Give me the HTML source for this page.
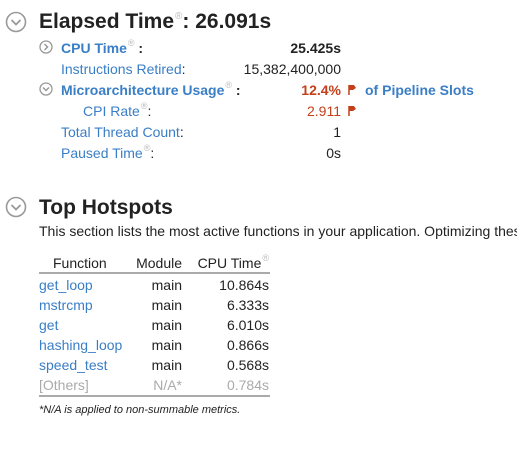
<!DOCTYPE html>
<html><head><meta charset="utf-8"><style>
html,body{margin:0;width:517px;height:458px;overflow:hidden}
body{background:#fff;font-family:"Liberation Sans",sans-serif;color:#222;position:relative}
.a{position:absolute;white-space:nowrap}
.h{font-size:21px;font-weight:bold;color:#222;line-height:24px}
.t{font-size:14px;line-height:16px}
.b{color:#3a7ec6}
.o{color:#c4401a}
.r{text-align:right}
sup{font-size:9px;color:#bbb;font-weight:normal;vertical-align:baseline;position:relative;top:-7px;line-height:0;margin-left:1px}
.hr{position:absolute;left:39px;width:231px;height:2px;background:#aaa}
.g{color:#aaa}
</style></head><body>
<svg class="a" style="left:5px;top:11px" width="22" height="22"><circle cx="11" cy="11" r="9.5" fill="none" stroke="#999" stroke-width="1.6"/><path d="M6.5 9 L11 13.5 L15.5 9" fill="none" stroke="#999" stroke-width="1.8"/></svg>
<div class="a h" style="left:39px;top:10px">Elapsed Time<sup style="font-size:10px;top:-9px">®</sup>: 26.091s</div>

<svg class="a" style="left:39px;top:40px" width="14" height="14"><circle cx="7" cy="7" r="6" fill="none" stroke="#999" stroke-width="1.3"/><path d="M5.5 4 L8.5 7 L5.5 10" fill="none" stroke="#999" stroke-width="1.5"/></svg>
<div class="a t b" style="left:61px;top:40px;font-weight:bold">CPU Time<sup>®</sup><span style="color:#222"> :</span></div>
<div class="a t r" style="right:176px;top:40px;font-weight:bold">25.425s</div>

<div class="a t b" style="left:61px;top:61px">Instructions Retired<span style="color:#222">:</span></div>
<div class="a t r" style="right:176px;top:61px">15,382,400,000</div>

<svg class="a" style="left:39px;top:82px" width="14" height="14"><circle cx="7" cy="7" r="6" fill="none" stroke="#999" stroke-width="1.3"/><path d="M4 5.5 L7 8.5 L10 5.5" fill="none" stroke="#999" stroke-width="1.5"/></svg>
<div class="a t b" style="left:61px;top:82px;font-weight:bold">Microarchitecture Usage<sup>®</sup><span style="color:#222"> :</span></div>
<div class="a t r o" style="right:176px;top:82px;font-weight:bold">12.4%</div>
<svg class="a" style="left:348px;top:84px" width="10" height="12"><path d="M1 1 V11" stroke="#c4401a" stroke-width="1.5"/><path d="M1.5 1 H6 L8 4 L5 6 H1.5Z" fill="#c4401a"/></svg>
<div class="a t b" style="left:365px;top:82px;font-weight:bold">of Pipeline Slots</div>

<div class="a t b" style="left:83px;top:103px">CPI Rate<sup>®</sup><span style="color:#222">:</span></div>
<div class="a t r o" style="right:176px;top:103px">2.911</div>
<svg class="a" style="left:348px;top:105px" width="10" height="12"><path d="M1 1 V11" stroke="#c4401a" stroke-width="1.5"/><path d="M1.5 1 H6 L8 4 L5 6 H1.5Z" fill="#c4401a"/></svg>

<div class="a t b" style="left:61px;top:124px">Total Thread Count<span style="color:#222">:</span></div>
<div class="a t r" style="right:176px;top:124px">1</div>
<div class="a t b" style="left:61px;top:145px">Paused Time<sup>®</sup><span style="color:#222">:</span></div>
<div class="a t r" style="right:176px;top:145px">0s</div>

<svg class="a" style="left:5px;top:196px" width="22" height="22"><circle cx="11" cy="11" r="9.5" fill="none" stroke="#999" stroke-width="1.6"/><path d="M6.5 9 L11 13.5 L15.5 9" fill="none" stroke="#999" stroke-width="1.8"/></svg>
<div class="a h" style="left:39px;top:196px">Top Hotspots</div>
<div class="a t" style="left:39px;top:223px;width:478px;overflow:hidden">This section lists the most active functions in your application. Optimizing these hotspot functions typically results in improving overall application performance.</div>

<div class="a t" style="left:53px;top:255px">Function</div>
<div class="a t r" style="right:335px;top:255px">Module</div>
<div class="a t r" style="right:248px;top:255px">CPU Time<sup>®</sup></div>
<div class="hr" style="top:272px"></div>

<div class="a t b" style="left:39px;top:277px">get_loop</div><div class="a t r" style="right:335px;top:277px">main</div><div class="a t r" style="right:248px;top:277px">10.864s</div>
<div class="a t b" style="left:39px;top:297px">mstrcmp</div><div class="a t r" style="right:335px;top:297px">main</div><div class="a t r" style="right:248px;top:297px">6.333s</div>
<div class="a t b" style="left:39px;top:317px">get</div><div class="a t r" style="right:335px;top:317px">main</div><div class="a t r" style="right:248px;top:317px">6.010s</div>
<div class="a t b" style="left:39px;top:337px">hashing_loop</div><div class="a t r" style="right:335px;top:337px">main</div><div class="a t r" style="right:248px;top:337px">0.866s</div>
<div class="a t b" style="left:39px;top:357px">speed_test</div><div class="a t r" style="right:335px;top:357px">main</div><div class="a t r" style="right:248px;top:357px">0.568s</div>
<div class="a t g" style="left:39px;top:377px">[Others]</div><div class="a t r g" style="right:335px;top:377px">N/A*</div><div class="a t r g" style="right:248px;top:377px">0.784s</div>
<div class="hr" style="top:395px"></div>
<div class="a" style="left:39px;top:404px;font-size:11px;font-style:italic">*N/A is applied to non-summable metrics.</div>
</body></html>
